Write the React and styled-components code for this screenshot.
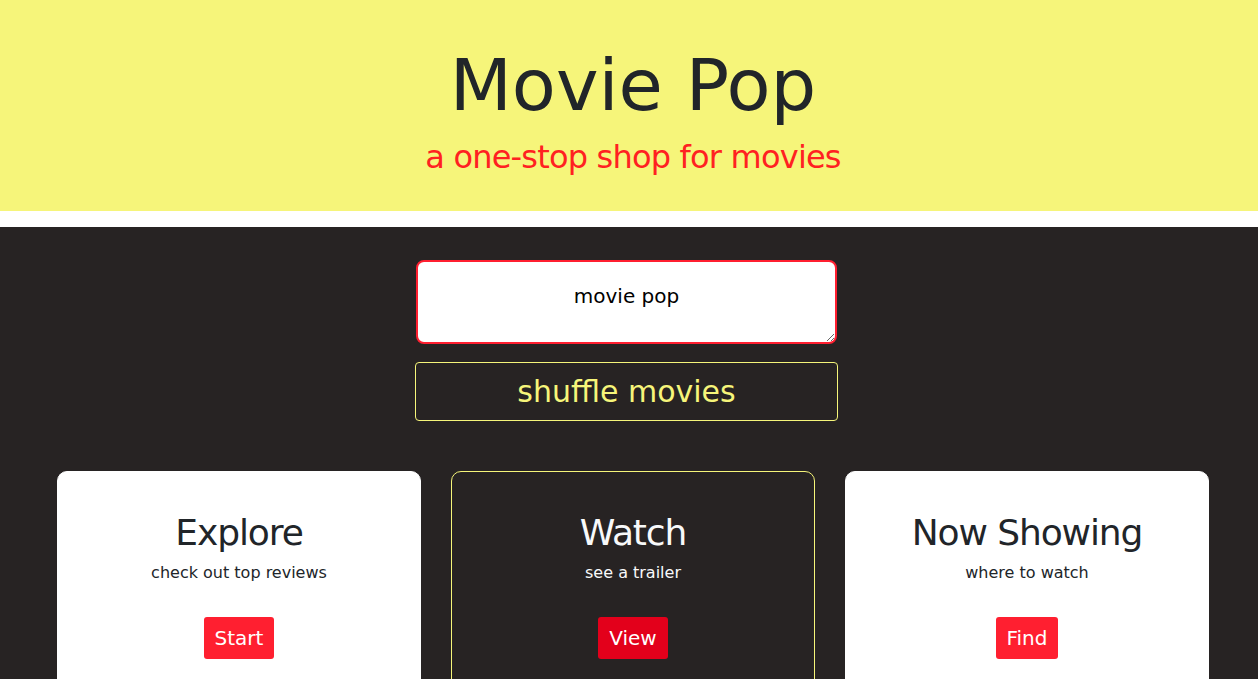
import React from 'react';
import styled, { createGlobalStyle } from 'styled-components';

const GlobalStyle = createGlobalStyle`
  body {
    margin: 0;
    background: #ffffff;
    font-family: "DejaVu Sans", "Liberation Sans", sans-serif;
    color: #212529;
  }
`;

const Header = styled.header`
  background: #f6f57a;
  padding: 42px 0 34px;
  margin-bottom: 16px;
  text-align: center;
`;

const Title = styled.h1`
  margin: 0;
  padding-left: 8px;
  font-size: 72px;
  line-height: 86px;
  font-weight: 400;
  color: #212529;
`;

const Tagline = styled.h2`
  margin: 9px 0 0;
  padding-left: 8px;
  font-size: 32px;
  line-height: 40px;
  font-weight: 400;
  color: #ff2121;
  letter-spacing: -0.8px;
`;

const Main = styled.main`
  background: #272323;
  padding: 33px 0 40px;
  min-height: 600px;
`;

const Form = styled.div`
  width: 423px;
  padding-right: 5px;
  margin: 0 auto;
  display: flex;
  flex-direction: column;
  align-items: center;
  gap: 18px;
`;

const Search = styled.textarea`
  box-sizing: border-box;
  width: 421px;
  height: 84px;
  border: 2px solid #ff1f30;
  border-radius: 8px;
  background: #ffffff;
  padding: 19px 12px 0;
  font-family: inherit;
  font-size: 20px;
  line-height: 30px;
  text-align: center;
  color: #000;
  outline: none;
`;

const Shuffle = styled.button`
  box-sizing: border-box;
  width: 423px;
  height: 59px;
  background: transparent;
  border: 1px solid #f6f57a;
  border-radius: 4px;
  color: #f6f57a;
  font-family: inherit;
  font-size: 30px;
  line-height: 36px;
  padding: 0;
  cursor: pointer;
`;

const Cards = styled.section`
  display: grid;
  grid-template-columns: repeat(3, 1fr);
  gap: 30px;
  padding: 0 49px 0 57px;
  margin-top: 50px;
`;

const Card = styled.div`
  box-sizing: border-box;
  background: ${p => (p.$dark ? '#272323' : '#ffffff')};
  border: 1px solid ${p => (p.$dark ? '#f6f57a' : '#ffffff')};
  border-radius: 10px;
  padding: 39px 16px 40px;
  text-align: center;
  color: ${p => (p.$dark ? '#f8f9fa' : '#212529')};
`;

const CardTitle = styled.h3`
  margin: 0;
  font-size: 36px;
  line-height: 43px;
  font-weight: 400;
  letter-spacing: -1.1px;
`;

const CardText = styled.p`
  margin: 7px 0 0;
  font-size: 16px;
  line-height: 24px;
`;

const Action = styled.button`
  margin-top: 32px;
  border: none;
  border-radius: 3px;
  background: ${p => (p.$dark ? '#e3001b' : '#ff1f30')};
  color: #ffffff;
  font-family: inherit;
  font-size: 20px;
  line-height: 30px;
  padding: 6px 11px;
  cursor: pointer;
`;

const cards = [
  { title: 'Explore', text: 'check out top reviews', action: 'Start' },
  { title: 'Watch', text: 'see a trailer', action: 'View', dark: true },
  { title: 'Now Showing', text: 'where to watch', action: 'Find' },
];

export default function App() {
  return (
    <>
      <GlobalStyle />
      <Header>
        <Title>Movie Pop</Title>
        <Tagline>a one-stop shop for movies</Tagline>
      </Header>
      <Main>
        <Form>
          <Search defaultValue="movie pop" />
          <Shuffle>shuffle movies</Shuffle>
        </Form>
        <Cards>
          {cards.map(c => (
            <Card key={c.title} $dark={c.dark}>
              <CardTitle>{c.title}</CardTitle>
              <CardText>{c.text}</CardText>
              <Action $dark={c.dark}>{c.action}</Action>
            </Card>
          ))}
        </Cards>
      </Main>
    </>
  );
}
